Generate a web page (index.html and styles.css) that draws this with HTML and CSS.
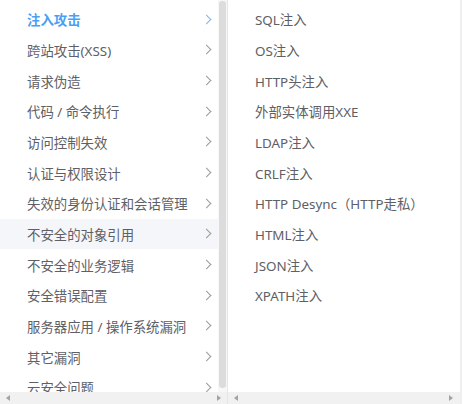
FILE: index.html
```html
<!DOCTYPE html>
<html lang="zh-CN">
<head>
<meta charset="utf-8">
<link rel="stylesheet" href="styles.css">
</head>
<body>
<div class="cascader">
  <div class="panel panel-left">
    <div class="panel-body">
      <ul class="menu">
        <li class="item active"><span>注入攻击</span><i class="chev"></i></li>
        <li class="item"><span>跨站攻击(XSS)</span><i class="chev"></i></li>
        <li class="item"><span>请求伪造</span><i class="chev"></i></li>
        <li class="item"><span>代码 / 命令执行</span><i class="chev"></i></li>
        <li class="item"><span>访问控制失效</span><i class="chev"></i></li>
        <li class="item"><span>认证与权限设计</span><i class="chev"></i></li>
        <li class="item"><span>失效的身份认证和会话管理</span><i class="chev"></i></li>
        <li class="item hover"><span>不安全的对象引用</span><i class="chev"></i></li>
        <li class="item"><span>不安全的业务逻辑</span><i class="chev"></i></li>
        <li class="item"><span>安全错误配置</span><i class="chev"></i></li>
        <li class="item"><span>服务器应用 / 操作系统漏洞</span><i class="chev"></i></li>
        <li class="item"><span>其它漏洞</span><i class="chev"></i></li>
        <li class="item"><span>云安全问题</span><i class="chev"></i></li>
      </ul>
      <div class="vbar"><div class="vthumb"></div></div>
    </div>
    <div class="hbar"><i class="arr arr-l"></i><i class="arr arr-r"></i></div>
  </div>
  <div class="panel panel-right">
    <div class="panel-body">
      <ul class="menu">
        <li class="item"><span>SQL注入</span></li>
        <li class="item"><span>OS注入</span></li>
        <li class="item"><span>HTTP头注入</span></li>
        <li class="item"><span>外部实体调用XXE</span></li>
        <li class="item"><span>LDAP注入</span></li>
        <li class="item"><span>CRLF注入</span></li>
        <li class="item"><span>HTTP Desync（HTTP走私）</span></li>
        <li class="item"><span>HTML注入</span></li>
        <li class="item"><span>JSON注入</span></li>
        <li class="item"><span>XPATH注入</span></li>
      </ul>
    </div>
    <div class="hbar"><i class="arr arr-l"></i><i class="arr arr-r"></i></div>
  </div>
</div>
</body>
</html>
```
FILE: styles.css
```css
html, body {
  margin: 0;
  padding: 0;
  background: #fff;
}
body {
  width: 463px;
  height: 404px;
  overflow: hidden;
  font-family: "Noto Sans", "Noto Sans CJK SC", sans-serif;
  font-size: 13.4px;
  color: #5e6066;
}
.cascader {
  display: flex;
  height: 404px;
}
.panel {
  display: flex;
  flex-direction: column;
  height: 404px;
}
.panel-left {
  width: 227px;
}
.panel-right {
  width: 232px;
  border-left: 1px solid #e6e6e6;
  border-right: 2px solid #efefef;
}
.panel-body {
  flex: 1;
  display: flex;
  min-height: 0;
  overflow: hidden;
}
.menu {
  flex: 1;
  list-style: none;
  margin: 0;
  padding: 4px 0 0 0;
}
.item {
  height: 30.67px;
  display: flex;
  align-items: center;
  justify-content: space-between;
  padding: 0 5px 0 27px;
  white-space: nowrap;
}
.item.active {
  color: #4a9ff5;
  font-weight: bold;
}
.item.hover {
  background: #f5f6fa;
}
.chev {
  width: 6px;
  height: 6px;
  border-right: 1px solid #9a9a9a;
  border-top: 1px solid #9a9a9a;
  transform: rotate(45deg);
  margin-right: 3px;
}
.item.active .chev {
  border-color: #7fb3e8;
}
.vbar {
  width: 9px;
  background: #f7f7f7;
  padding: 1px 1px 4px 1px;
  box-sizing: border-box;
  display: flex;
}
.vthumb {
  flex: 1;
  background: #dcdcdc;
  border-radius: 3px;
}
.hbar {
  height: 12px;
  background: #f1f1f1;
  display: flex;
  align-items: center;
  justify-content: space-between;
  padding: 0 6px;
}
.panel-right .hbar {
  padding: 0 7px 0 6px;
}
.arr {
  width: 0;
  height: 0;
  border-top: 3.5px solid transparent;
  border-bottom: 3.5px solid transparent;
}
.arr-l {
  border-right: 4px solid #a3a3a3;
}
.arr-r {
  border-left: 4px solid #a3a3a3;
}
```
